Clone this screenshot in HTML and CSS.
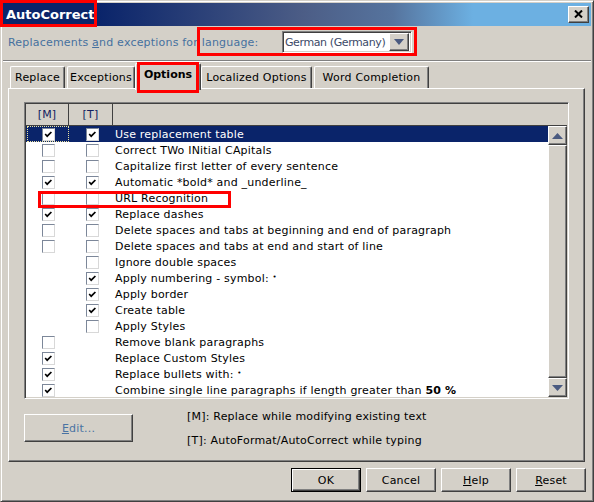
FILE: index.html
```html
<!DOCTYPE html>
<html>
<head>
<meta charset="utf-8">
<title>AutoCorrect</title>
<link rel="stylesheet" href="styles.css">
</head>
<body>
<div class="window">
  <div class="titlebar">
    <span class="title">AutoCorrect</span>
    <span class="close"><svg width="9" height="8" viewBox="0 0 9 8"><path d="M1 0.5 L8 7.5 M8 0.5 L1 7.5" stroke="#000" stroke-width="2" fill="none"/></svg></span>
  </div>
  <div class="langrow">
    <span class="langlabel">Replacements <u>a</u>nd exceptions for language:</span>
    <div class="combo">
      <span class="combotext">German (Germany)</span>
      <span class="combobtn"><svg width="10" height="6" viewBox="0 0 10 6"><polygon points="0,0 10,0 5,6" fill="#4a5a80"/></svg></span>
    </div>
  </div>
  <div class="sep"></div>
  <div class="tabs">
    <div class="tab w-replace">Replace</div>
    <div class="tab w-exc gap">Exceptions</div>
    <div class="tab sel w-opt">Options</div>
    <div class="tab w-loc">Localized Options</div>
    <div class="tab w-word gap">Word Completion</div>
  </div>
  <div class="panel">
    <div class="list">
      <div class="listhead">
        <div class="hc hm">[M]</div>
        <div class="hc ht">[T]</div>
        <div class="hc hx"></div>
      </div>
      <div class="listbody">
        <div class="rows">
          <div class="row selected"><span class="c m focus"><span class="cb"><svg width="11" height="11" viewBox="0 0 11 11"><polyline points="2.2,5 4.2,7.2 8.4,3" fill="none" stroke="#000" stroke-width="1.7"/></svg></span></span><span class="c t"><span class="cb"><svg width="11" height="11" viewBox="0 0 11 11"><polyline points="2.2,5 4.2,7.2 8.4,3" fill="none" stroke="#000" stroke-width="1.7"/></svg></span></span><span class="lbl">Use replacement table</span></div>
          <div class="row"><span class="c m"><span class="cb"></span></span><span class="c t"><span class="cb"></span></span><span class="lbl">Correct TWo INitial CApitals</span></div>
          <div class="row"><span class="c m"><span class="cb"></span></span><span class="c t"><span class="cb"></span></span><span class="lbl">Capitalize first letter of every sentence</span></div>
          <div class="row"><span class="c m"><span class="cb"><svg width="11" height="11" viewBox="0 0 11 11"><polyline points="2.2,5 4.2,7.2 8.4,3" fill="none" stroke="#000" stroke-width="1.7"/></svg></span></span><span class="c t"><span class="cb"><svg width="11" height="11" viewBox="0 0 11 11"><polyline points="2.2,5 4.2,7.2 8.4,3" fill="none" stroke="#000" stroke-width="1.7"/></svg></span></span><span class="lbl">Automatic *bold* and _underline_</span></div>
          <div class="row"><span class="c m"><span class="cb"></span></span><span class="c t"><span class="cb"></span></span><span class="lbl">URL Recognition</span></div>
          <div class="row"><span class="c m"><span class="cb"><svg width="11" height="11" viewBox="0 0 11 11"><polyline points="2.2,5 4.2,7.2 8.4,3" fill="none" stroke="#000" stroke-width="1.7"/></svg></span></span><span class="c t"><span class="cb"><svg width="11" height="11" viewBox="0 0 11 11"><polyline points="2.2,5 4.2,7.2 8.4,3" fill="none" stroke="#000" stroke-width="1.7"/></svg></span></span><span class="lbl">Replace dashes</span></div>
          <div class="row"><span class="c m"><span class="cb"></span></span><span class="c t"><span class="cb"></span></span><span class="lbl">Delete spaces and tabs at beginning and end of paragraph</span></div>
          <div class="row"><span class="c m"><span class="cb"></span></span><span class="c t"><span class="cb"></span></span><span class="lbl">Delete spaces and tabs at end and start of line</span></div>
          <div class="row"><span class="c m"></span><span class="c t"><span class="cb"></span></span><span class="lbl">Ignore double spaces</span></div>
          <div class="row"><span class="c m"></span><span class="c t"><span class="cb"><svg width="11" height="11" viewBox="0 0 11 11"><polyline points="2.2,5 4.2,7.2 8.4,3" fill="none" stroke="#000" stroke-width="1.7"/></svg></span></span><span class="lbl">Apply numbering - symbol: <span class="bul">•</span></span></div>
          <div class="row"><span class="c m"></span><span class="c t"><span class="cb"><svg width="11" height="11" viewBox="0 0 11 11"><polyline points="2.2,5 4.2,7.2 8.4,3" fill="none" stroke="#000" stroke-width="1.7"/></svg></span></span><span class="lbl">Apply border</span></div>
          <div class="row"><span class="c m"></span><span class="c t"><span class="cb"><svg width="11" height="11" viewBox="0 0 11 11"><polyline points="2.2,5 4.2,7.2 8.4,3" fill="none" stroke="#000" stroke-width="1.7"/></svg></span></span><span class="lbl">Create table</span></div>
          <div class="row"><span class="c m"></span><span class="c t"><span class="cb"></span></span><span class="lbl">Apply Styles</span></div>
          <div class="row"><span class="c m"><span class="cb"></span></span><span class="c t"></span><span class="lbl">Remove blank paragraphs</span></div>
          <div class="row"><span class="c m"><span class="cb"><svg width="11" height="11" viewBox="0 0 11 11"><polyline points="2.2,5 4.2,7.2 8.4,3" fill="none" stroke="#000" stroke-width="1.7"/></svg></span></span><span class="c t"></span><span class="lbl">Replace Custom Styles</span></div>
          <div class="row"><span class="c m"><span class="cb"><svg width="11" height="11" viewBox="0 0 11 11"><polyline points="2.2,5 4.2,7.2 8.4,3" fill="none" stroke="#000" stroke-width="1.7"/></svg></span></span><span class="c t"></span><span class="lbl">Replace bullets with: <span class="bul">•</span></span></div>
          <div class="row"><span class="c m"><span class="cb"><svg width="11" height="11" viewBox="0 0 11 11"><polyline points="2.2,5 4.2,7.2 8.4,3" fill="none" stroke="#000" stroke-width="1.7"/></svg></span></span><span class="c t"></span><span class="lbl">Combine single line paragraphs if length greater than <b>50 %</b></span></div>
        </div>
        <div class="vscroll">
          <div class="sbtn"><svg width="11" height="6" viewBox="0 0 11 6"><polygon points="5.5,0 11,6 0,6" fill="#4a5a80"/></svg></div>
          <div class="thumb"></div>
          <div class="sbtn"><svg width="11" height="6" viewBox="0 0 11 6"><polygon points="0,0 11,0 5.5,6" fill="#4a5a80"/></svg></div>
        </div>
      </div>
    </div>
    <div class="below">
      <button class="btn edit"><u>E</u>dit...</button>
      <div class="legend">
        <div>[M]: Replace while modifying existing text</div>
        <div>[T]: AutoFormat/AutoCorrect while typing</div>
      </div>
    </div>
  </div>
  <div class="buttons">
    <button class="btn default">OK</button>
    <button class="btn">Cancel</button>
    <button class="btn"><u>H</u>elp</button>
    <button class="btn"><u>R</u>eset</button>
  </div>
</div>
<div class="mark mark-title"></div>
<div class="mark mark-lang"></div>
<div class="mark mark-tab"></div>
<div class="mark mark-url"></div>
</body>
</html>
```

FILE: styles.css
```css
* { box-sizing: border-box; }
html, body { margin: 0; padding: 0; }
body {
  width: 594px;
  height: 502px;
  position: relative;
  overflow: hidden;
  background: #d4d0c8;
  font-family: "DejaVu Sans", "Noto Sans", sans-serif;
  font-size: 11px;
  letter-spacing: 0.2px;
  color: #000;
}
.window {
  width: 594px;
  height: 502px;
  border: 1px solid;
  border-color: #d4d0c8 #404040 #404040 #d4d0c8;
  box-shadow: inset 1px 1px #fff, inset -1px -1px #808080;
  padding: 2px;
  display: flex;
  flex-direction: column;
}
.titlebar {
  flex: none;
  height: 23px;
  display: flex;
  align-items: center;
  justify-content: space-between;
  padding: 0 2px 0 3px;
  background: linear-gradient(to right, #0a246a 0px, #0a246a 95px, #4c5d86 300px, #56749e 390px, #6cb0e2 470px, #6cb0e2 100%);
}
.title {
  color: #fff;
  font-weight: bold;
  font-size: 13px;
  letter-spacing: 0;
}
.close {
  width: 21px;
  height: 17px;
  margin-top: -1px;
  background: #d4d0c8;
  border: 1px solid;
  border-color: #fff #404040 #404040 #fff;
  box-shadow: inset -1px -1px #808080;
  display: flex;
  align-items: center;
  justify-content: center;
}
.langrow {
  flex: none;
  height: 34px;
  display: flex;
  align-items: flex-start;
  padding: 5px 0 0 5px;
}
.langlabel {
  width: 274px;
  line-height: 22px;
  padding-top: 1px;
  color: #46709f;
  white-space: nowrap;
}
.combo {
  width: 130px;
  height: 22px;
  background: #fff;
  border: 1px solid;
  border-color: #808080 #fff #fff #808080;
  box-shadow: inset 1px 1px #404040, inset -1px -1px #d4d0c8;
  display: flex;
  align-items: center;
  padding: 1px 2px 1px 1px;
}
.combotext {
  flex: 1;
  min-width: 0;
  white-space: nowrap;
  padding-left: 1px;
  letter-spacing: -0.4px;
  color: #3c4a68;
}
.combobtn {
  width: 20px;
  height: 18px;
  flex: none;
  background: #d4d0c8;
  border: 1px solid;
  border-color: #fff #404040 #404040 #fff;
  box-shadow: inset -1px -1px #808080;
  display: flex;
  align-items: center;
  justify-content: center;
}
.sep {
  flex: none;
  height: 2px;
  border-top: 1px solid #808080;
  border-bottom: 1px solid #fff;
}
.tabs {
  flex: none;
  height: 26px;
  display: flex;
  align-items: flex-end;
  padding-left: 7px;
}
.tab {
  height: 22px;
  line-height: 21px;
  text-align: center;
  white-space: nowrap;
  border-top: 1px solid #fff;
  border-left: 1px solid #fff;
  border-right: 1px solid #404040;
  box-shadow: inset -1px 0 #808080;
  border-radius: 2px 2px 0 0;
  background: #d4d0c8;
}
.tab.gap { margin-left: 2px; }
.tab.sel {
  height: 27px;
  margin-bottom: -2px;
  position: relative;
  z-index: 1;
  font-weight: bold;
  letter-spacing: 0;
  line-height: 22px;
}
.w-replace { width: 55px; }
.w-exc { width: 68px; }
.w-opt { width: 66px; }
.w-loc { width: 111px; }
.w-word { width: 115px; }
.panel {
  flex: none;
  height: 374px;
  margin: 0 6px 0 5px;
  border: 1px solid;
  border-color: #fff #404040 #404040 #fff;
  box-shadow: inset -1px -1px #808080;
  padding: 13px 15px 0 15px;
}
.list {
  height: 297px;
  border: 1px solid;
  border-color: #808080 #fff #fff #808080;
  box-shadow: inset 1px 1px #404040, inset -1px -1px #d4d0c8;
  padding: 1px;
  display: flex;
  flex-direction: column;
}
.listhead {
  flex: none;
  height: 22px;
  display: flex;
  background: #d4d0c8;
  border-bottom: 1px solid #404040;
}
.hc {
  line-height: 21px;
  text-align: center;
  color: #102060;
}
.hm { width: 43px; border-right: 1px solid #404040; }
.ht { width: 44px; border-right: 1px solid #404040; }
.hx { flex: 1; }
.listbody {
  flex: 1;
  min-height: 0;
  display: flex;
  background: #fff;
  overflow: hidden;
}
.rows {
  flex: 1;
  overflow: hidden;
}
.row {
  height: 16px;
  display: flex;
  align-items: center;
  white-space: nowrap;
}
.row.selected {
  background: #0a246a;
  color: #fff;
}
.c {
  height: 16px;
  display: flex;
  align-items: center;
  flex: none;
}
.c.m { width: 43px; padding-left: 16px; }
.c.t { width: 44px; padding-left: 17px; }
.c.focus {
  outline: 1px dotted #e8e0a0;
  outline-offset: -1px;
  margin-left: 1px;
  width: 42px;
  padding-left: 15px;
}
.lbl { padding-left: 2px; }
.bul {
  font-size: 7px;
  vertical-align: 3px;
}
.cb {
  width: 13px;
  height: 13px;
  background: #fff;
  border: 1px solid;
  border-color: #7c8799 #d8d8d8 #d8d8d8 #7c8799;
  display: block;
}
.cb svg { display: block; }
.vscroll {
  width: 19px;
  flex: none;
  display: flex;
  flex-direction: column;
  background: #d4d0c8;
}
.sbtn, .thumb {
  background: #d4d0c8;
  border: 1px solid;
  border-color: #fff #404040 #404040 #fff;
  box-shadow: inset -1px -1px #808080;
}
.sbtn {
  height: 19px;
  flex: none;
  display: flex;
  align-items: center;
  justify-content: center;
}
.thumb { flex: 1; }
.below {
  display: flex;
  align-items: flex-start;
  margin-top: 6px;
}
.btn {
  width: 70px;
  height: 24px;
  padding: 0;
  font: inherit;
  letter-spacing: inherit;
  color: #000;
  background: #d4d0c8;
  border: 1px solid;
  border-color: #fff #404040 #404040 #fff;
  box-shadow: inset -1px -1px #808080;
}
.btn.default {
  border-color: #000;
  box-shadow: inset 1px 1px #fff, inset -1px -1px #404040, inset -2px -2px #808080;
}
.btn.edit {
  width: 109px;
  height: 28px;
  margin-top: 9px;
  color: #4a73a3;
}
.legend {
  margin-left: 54px;
  line-height: 24px;
  white-space: nowrap;
}
.buttons {
  flex: none;
  height: 24px;
  margin-top: 6px;
  display: flex;
  justify-content: flex-end;
  gap: 5px;
  padding-right: 5px;
}
.mark {
  position: absolute;
  border: 3px solid #f00;
  pointer-events: none;
  z-index: 5;
}
.mark-title { left: 0; top: 0; width: 97px; height: 27px; }
.mark-lang { left: 197px; top: 27px; width: 220px; height: 29px; }
.mark-tab { left: 137px; top: 62px; width: 62px; height: 31px; }
.mark-url { left: 38px; top: 191px; width: 193px; height: 17px; }
```
